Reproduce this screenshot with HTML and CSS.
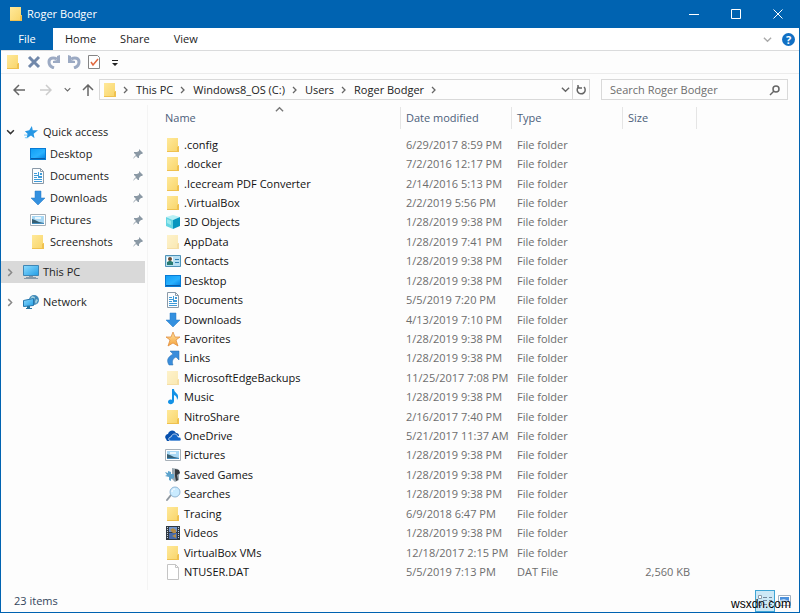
FILE: index.html
```html
<!DOCTYPE html>
<html lang="en">
<head>
    <meta charset="utf-8">
    <title>Roger Bodger</title>
    <link rel="stylesheet" href="styles.css">
</head>
<body>
    <svg class="sprite" aria-hidden="true">
        <defs>
            <linearGradient id="gFolder" x2="1" y2="1"><stop offset="0" stop-color="#ffe99a"/><stop offset="1" stop-color="#f8d468"/></linearGradient>
            <linearGradient id="gBlue" x2="1" y2="1"><stop offset="0" stop-color="#129ff5"/><stop offset=".6" stop-color="#2ab2ff"/><stop offset="1" stop-color="#0887e5"/></linearGradient>
            <linearGradient id="gScreen" x2="1" y2="1"><stop offset="0" stop-color="#8edcff"/><stop offset="1" stop-color="#219de5"/></linearGradient>
            <linearGradient id="gStar" x2="0" y2="1"><stop offset="0" stop-color="#ffe2a0"/><stop offset="1" stop-color="#f5a33b"/></linearGradient>
        </defs>
        <symbol id="folder" viewBox="0 0 16 16"><path fill="url(#gFolder)" d="M2 1h11v8h1v6H2z"/><path fill="#efc14f" d="M12 10l2-1v6h-2zM2 14h10v1H2z"/></symbol>
        <symbol id="desktop" viewBox="0 0 16 16"><path fill="#087bd4" d="M0 2h16v12H0z"/><path fill="url(#gBlue)" d="M1 3h14v9H1z"/><path fill="#0a5ca8" d="M1 12h14v1H1z"/></symbol>
        <symbol id="document" viewBox="0 0 16 16"><path fill="#fbfdff" stroke="#8b9aa8" d="M2.500.5h8l3 3v12h-11z"/><path fill="none" stroke="#8b9aa8" d="M10.500.5v3h3"/><path stroke="#3f9bd8" d="M4 5.500h3M4 7.500h4M4 9.500h3M4 11.500h8M4 13.500h8"/><path fill="#3f9bd8" d="M8 4h1v6H8zM10 5h2v2h-2zM9 8h3v2H9z"/></symbol>
        <symbol id="download" viewBox="0 0 16 16"><path fill="#3390df" stroke="#2479c6" stroke-width=".5" d="M5 1h6v7h4l-7 7-7-7h4z"/></symbol>
        <symbol id="picture" viewBox="0 0 16 16"><path fill="#fff" stroke="#a7b0b8" d="M.5 2.500h15v11H.5z"/><path fill="#a8d8f5" d="M2 4h12v8H2z"/><path fill="#e9f6fc" d="M5 5h6v2H5z"/><path fill="#365f73" d="M2 7l3 1 4 2 5 1v1H2z"/><path fill="#458ebf" d="M2 11h12v1H2z"/></symbol>
        <symbol id="pc" viewBox="0 0 16 16"><path fill="url(#gScreen)" stroke="#3e86b5" d="M.5 1.500h15v10H.5z"/><path fill="#8799a8" d="M6 12h4v1H6zM3 13h10v1H3zM1 14h14v1H1z"/></symbol>
        <symbol id="network" viewBox="0 0 16 16"><circle cx="11" cy="6" r="5" fill="#4089b8"/><path fill="#a1d0df" d="M9 2l3 1-1 3-4-1zM13 5l2 1-2 4-1-2z"/><path fill="url(#gScreen)" stroke="#2577ad" d="M.5 6.500l10-2v7l-10 1z"/><path fill="#27749f" d="M4 12h3v2h2v1H3v-1h1z"/></symbol>
        <symbol id="quick" viewBox="0 0 16 16"><path fill="#2797e4" d="M9 1l1 5 6 0-5 4 1 5-4-3-5 3 1-5-3-3 5-1z"/><path stroke="#69c3f5" d="M0 11.500h4M1 14.500h4"/></symbol>
        <symbol id="cube" viewBox="0 0 16 16"><path fill="#b8f0f5" d="M1 3l7-2 7 2-7 3z"/><path fill="#65d5e3" d="M1 3l7 3v9l-7-3z"/><path fill="#0796bf" d="M15 3L8 6v9l7-3z"/><path fill="#9ae9ed" d="M2 5l4 2v4L2 9z"/></symbol>
        <symbol id="contact" viewBox="0 0 16 16"><path fill="#b7dff2" stroke="#4f93b8" d="M.5 2.500h15v11H.5z"/><path fill="#fff" d="M2 4h6v8H2z"/><circle cx="5" cy="6" r="2" fill="#654b38"/><path fill="#297b71" d="M2 12V9l2-1h2l2 1v3z"/><path stroke="#3182b3" d="M10 6.500h4M10 9.500h4"/></symbol>
        <symbol id="star" viewBox="0 0 16 16"><path fill="url(#gStar)" stroke="#dc8736" stroke-width=".7" d="M8 1l2 5h5l-4 3 2 6-5-3-5 3 2-6-4-3h5z"/></symbol>
        <symbol id="shortcut" viewBox="0 0 16 16"><path fill="#3a8ddb" stroke="#276faf" stroke-width=".5" d="M5 1h9v9l-3-3c-4 2-4 5-3 8H4c-3-5-1-8 4-11z"/></symbol>
        <symbol id="music" viewBox="0 0 16 16"><path fill="#1492e6" d="M7 0h2c0 4 5 4 4 9l-1 2c0-3-1-4-3-5v6c0 4-6 4-6 1 0-2 2-3 4-2z"/></symbol>
        <symbol id="cloud" viewBox="0 0 16 16"><path fill="#0750ad" d="M1 11c-2-2 0-5 2-5 1-4 6-5 8-1 2 0 3 1 3 3L5 13H2z"/><path fill="#1265c7" stroke="#fff" stroke-width=".7" d="M6 13c-3 0-3-4 0-4 1-4 6-4 7 0 4 0 4 4 1 4z"/></symbol>
        <symbol id="games" viewBox="0 0 16 16"><path fill="#9ba8b0" d="M7 1l6 1 2 4-1 2v5l-4 2-3-3z"/><path fill="#34383c" d="M10 2l4 1 1 3-3 2 1 5-2 1-1-5z"/><path fill="#5da3cc" d="M0 5l3 1V4l3 1v2h3v4l-3 1v2l-2-1v-3L0 9l2-1z"/></symbol>
        <symbol id="search" viewBox="0 0 16 16"><path stroke="#8f979f" stroke-width="2" stroke-linecap="round" d="M2 14l4-5"/><circle cx="10" cy="6" r="5" fill="#c9ebff" stroke="#91b6d4"/><path fill="none" stroke="#fff" d="M7 6c0-2 1-3 3-3"/></symbol>
        <symbol id="video" viewBox="0 0 16 16"><path fill="#303943" d="M1 1h14v14H1z"/><path fill="#7195cf" d="M4 2h8v5H4z"/><path fill="#496baa" d="M4 8h8v6H4z"/><path fill="#b58c46" d="M5 5l3-2 3 2v3H8zM7 11l4-2v4z"/><path stroke="#c9d1d8" stroke-dasharray="1 1" d="M2.500 2v12M13.500 2v12"/></symbol>
        <symbol id="file" viewBox="0 0 16 16"><path fill="#fff" stroke="#c4c4c4" d="M2.500.5h8l3 3v12h-11z"/><path fill="none" stroke="#c4c4c4" d="M10.500.5v3h3"/></symbol>
        <symbol id="pin" viewBox="0 0 10 10"><path fill="#8b99a5" d="M6 0l4 4-1 1H8L6 7v2L5 9 3 7 1 9 0 10l1-2 2-2-2-2V3h3l2-1z"/></symbol>
        <symbol id="right" viewBox="0 0 8 8"><path fill="none" stroke="currentColor" stroke-width="1.300" d="M2 1l3 3-3 3"/></symbol>
        <symbol id="down" viewBox="0 0 10 10"><path fill="none" stroke="currentColor" stroke-width="1.500" d="M1 3l4 4 4-4"/></symbol>
        <symbol id="arrow" viewBox="0 0 12 12"><path fill="none" stroke="currentColor" stroke-width="1.500" d="M12 6H1M6 1L1 6l5 5"/></symbol>
        <symbol id="turn" viewBox="0 0 14 14"><path fill="none" stroke="#9caac3" stroke-width="3" d="M7 13C4 12 2 10 2 7c0-4 4-5 8-3"/><path fill="#9caac3" d="M13 0v8H6V6l4-1V1z"/></symbol>
    </svg>

    <div class="window">
        <header class="titlebar">
            <svg class="icon"><use href="#folder"/></svg>
            <h1>Roger Bodger</h1>
            <div class="controls">
                <button aria-label="Minimize"><svg viewBox="0 0 10 10"><path d="M0 5.500h10"/></svg></button>
                <button aria-label="Maximize"><svg viewBox="0 0 10 10"><path d="M.5.5h9v9h-9z"/></svg></button>
                <button aria-label="Close"><svg viewBox="0 0 10 10"><path d="M.5.5l9 9M9.500.5l-9 9"/></svg></button>
            </div>
        </header>

        <nav class="ribbon">
            <button class="tab file-tab">File</button>
            <button class="tab">Home</button>
            <button class="tab">Share</button>
            <button class="tab">View</button>
            <button class="expand" aria-label="Expand the ribbon"><svg><use href="#down"/></svg></button>
            <button class="help" aria-label="Help">?</button>
        </nav>

        <div class="toolbar">
            <button aria-label="New folder"><svg class="icon"><use href="#folder"/></svg></button>
            <button aria-label="Delete"><svg class="tool" viewBox="0 0 14 14"><path stroke="#7188aa" stroke-width="3" d="M2 2l10 10M12 2L2 12"/></svg></button>
            <button aria-label="Redo"><svg class="tool"><use href="#turn"/></svg></button>
            <button aria-label="Undo"><svg class="tool flip"><use href="#turn"/></svg></button>
            <button aria-label="Properties"><svg class="tool" viewBox="0 0 14 14"><path fill="#fff" stroke="#858585" d="M1.500.5h9l2 2v11h-11z"/><path fill="none" stroke="#e0683e" stroke-width="1.500" d="M4 7l2 3 5-6"/></svg></button>
            <button aria-label="Customize toolbar"><svg class="tool" viewBox="0 0 14 14"><path fill="#222" d="M5 5h6v1H5zM5 8h6l-3 3z"/></svg></button>
        </div>

        <div class="navigation">
            <div class="history">
                <button aria-label="Back"><svg><use href="#arrow"/></svg></button>
                <button class="disabled" aria-label="Forward" disabled><svg class="flip"><use href="#arrow"/></svg></button>
                <button class="recent" aria-label="Recent locations"><svg><use href="#down"/></svg></button>
                <button aria-label="Up"><svg class="up"><use href="#arrow"/></svg></button>
            </div>
            <div class="address">
                <svg class="icon"><use href="#folder"/></svg>
                <svg class="crumb"><use href="#right"/></svg>
                <a href="#">This PC</a>
                <svg class="crumb"><use href="#right"/></svg>
                <a href="#">Windows8_OS (C:)</a>
                <svg class="crumb"><use href="#right"/></svg>
                <a href="#">Users</a>
                <svg class="crumb"><use href="#right"/></svg>
                <a href="#">Roger Bodger</a>
                <svg class="crumb"><use href="#right"/></svg>
                <button class="previous" aria-label="Previous locations"><svg><use href="#down"/></svg></button>
                <button class="refresh" aria-label="Refresh"><svg viewBox="0 0 12 12"><path fill="none" stroke="currentColor" stroke-width="1.500" d="M9 3a4 4 0 1 1-5-.5M3 1v3h4"/></svg></button>
            </div>
            <div class="search">
                <input type="text" placeholder="Search Roger Bodger" aria-label="Search Roger Bodger">
                <button aria-label="Search"><svg viewBox="0 0 12 12"><path fill="none" stroke="currentColor" stroke-width="1.500" d="M5 7l-4 4"/><circle cx="7" cy="5" r="3" fill="none" stroke="currentColor" stroke-width="1.500"/></svg></button>
            </div>
        </div>

        <main class="content">
            <aside class="sidebar">
                <ul>
                    <li><a class="root" href="#"><svg class="toggle open"><use href="#right"/></svg><svg class="icon quick"><use href="#quick"/></svg>Quick access</a></li>
                    <li><a href="#"><svg class="icon"><use href="#desktop"/></svg>Desktop<svg class="pin"><use href="#pin"/></svg></a></li>
                    <li><a href="#"><svg class="icon"><use href="#document"/></svg>Documents<svg class="pin"><use href="#pin"/></svg></a></li>
                    <li><a href="#"><svg class="icon"><use href="#download"/></svg>Downloads<svg class="pin"><use href="#pin"/></svg></a></li>
                    <li><a href="#"><svg class="icon"><use href="#picture"/></svg>Pictures<svg class="pin"><use href="#pin"/></svg></a></li>
                    <li><a href="#"><svg class="icon"><use href="#folder"/></svg>Screenshots<svg class="pin"><use href="#pin"/></svg></a></li>
                </ul>
                <a class="root selected" href="#"><svg class="toggle"><use href="#right"/></svg><svg class="icon"><use href="#pc"/></svg>This PC</a>
                <a class="root" href="#"><svg class="toggle"><use href="#right"/></svg><svg class="icon"><use href="#network"/></svg>Network</a>
            </aside>

            <section class="files">
                <table>
                    <colgroup><col class="col-name"><col class="col-date"><col class="col-type"><col class="col-size"><col></colgroup>
                    <thead>
                        <tr>
                            <th><button>Name</button><svg class="sort"><use href="#down"/></svg></th>
                            <th><button>Date modified</button></th>
                            <th><button>Type</button></th>
                            <th><button>Size</button></th>
                            <th></th>
                        </tr>
                    </thead>
                    <tbody>
                        <tr><td><a href="#"><svg class="icon"><use href="#folder"/></svg>.config</a></td><td>6/29/2017 8:59 PM</td><td>File folder</td><td></td></tr>
                        <tr><td><a href="#"><svg class="icon"><use href="#folder"/></svg>.docker</a></td><td>7/2/2016 12:17 PM</td><td>File folder</td><td></td></tr>
                        <tr><td><a href="#"><svg class="icon"><use href="#folder"/></svg>.Icecream PDF Converter</a></td><td>2/14/2016 5:13 PM</td><td>File folder</td><td></td></tr>
                        <tr><td><a href="#"><svg class="icon"><use href="#folder"/></svg>.VirtualBox</a></td><td>2/2/2019 5:56 PM</td><td>File folder</td><td></td></tr>
                        <tr><td><a href="#"><svg class="icon"><use href="#cube"/></svg>3D Objects</a></td><td>1/28/2019 9:38 PM</td><td>File folder</td><td></td></tr>
                        <tr><td><a href="#"><svg class="icon faded"><use href="#folder"/></svg>AppData</a></td><td>1/28/2019 7:41 PM</td><td>File folder</td><td></td></tr>
                        <tr><td><a href="#"><svg class="icon"><use href="#contact"/></svg>Contacts</a></td><td>1/28/2019 9:38 PM</td><td>File folder</td><td></td></tr>
                        <tr><td><a href="#"><svg class="icon"><use href="#desktop"/></svg>Desktop</a></td><td>1/28/2019 9:38 PM</td><td>File folder</td><td></td></tr>
                        <tr><td><a href="#"><svg class="icon"><use href="#document"/></svg>Documents</a></td><td>5/5/2019 7:20 PM</td><td>File folder</td><td></td></tr>
                        <tr><td><a href="#"><svg class="icon"><use href="#download"/></svg>Downloads</a></td><td>4/13/2019 7:10 PM</td><td>File folder</td><td></td></tr>
                        <tr><td><a href="#"><svg class="icon"><use href="#star"/></svg>Favorites</a></td><td>1/28/2019 9:38 PM</td><td>File folder</td><td></td></tr>
                        <tr><td><a href="#"><svg class="icon"><use href="#shortcut"/></svg>Links</a></td><td>1/28/2019 9:38 PM</td><td>File folder</td><td></td></tr>
                        <tr><td><a href="#"><svg class="icon faded"><use href="#folder"/></svg>MicrosoftEdgeBackups</a></td><td>11/25/2017 7:08 PM</td><td>File folder</td><td></td></tr>
                        <tr><td><a href="#"><svg class="icon"><use href="#music"/></svg>Music</a></td><td>1/28/2019 9:38 PM</td><td>File folder</td><td></td></tr>
                        <tr><td><a href="#"><svg class="icon"><use href="#folder"/></svg>NitroShare</a></td><td>2/16/2017 7:40 PM</td><td>File folder</td><td></td></tr>
                        <tr><td><a href="#"><svg class="icon"><use href="#cloud"/></svg>OneDrive</a></td><td>5/21/2017 11:37 AM</td><td>File folder</td><td></td></tr>
                        <tr><td><a href="#"><svg class="icon"><use href="#picture"/></svg>Pictures</a></td><td>1/28/2019 9:38 PM</td><td>File folder</td><td></td></tr>
                        <tr><td><a href="#"><svg class="icon"><use href="#games"/></svg>Saved Games</a></td><td>1/28/2019 9:38 PM</td><td>File folder</td><td></td></tr>
                        <tr><td><a href="#"><svg class="icon"><use href="#search"/></svg>Searches</a></td><td>1/28/2019 9:38 PM</td><td>File folder</td><td></td></tr>
                        <tr><td><a href="#"><svg class="icon"><use href="#folder"/></svg>Tracing</a></td><td>6/9/2018 6:47 PM</td><td>File folder</td><td></td></tr>
                        <tr><td><a href="#"><svg class="icon"><use href="#video"/></svg>Videos</a></td><td>1/28/2019 9:38 PM</td><td>File folder</td><td></td></tr>
                        <tr><td><a href="#"><svg class="icon"><use href="#folder"/></svg>VirtualBox VMs</a></td><td>12/18/2017 2:15 PM</td><td>File folder</td><td></td></tr>
                        <tr><td><a href="#"><svg class="icon"><use href="#file"/></svg>NTUSER.DAT</a></td><td>5/5/2019 7:13 PM</td><td>DAT File</td><td>2,560 KB</td></tr>
                    </tbody>
                </table>
            </section>
        </main>

        <footer class="statusbar">
            <span>23 items</span>
            <div class="views">
                <button class="active" aria-label="Details view"><svg viewBox="0 0 16 14"><path fill="#fff" stroke="#8b9cab" d="M1.500 1.500h3v3h-3zM1.500 8.500h3v3h-3z"/><path stroke="#71879b" stroke-dasharray="4 2" d="M6 3.500h9M6 6.500h9M6 10.500h9"/></svg></button>
                <button aria-label="Large icons view"><svg viewBox="0 0 16 14"><path fill="#fff" stroke="#a1b0c0" d="M1.500 1.500h12v10h-12z"/><path fill="#4c91dc" d="M3 3h9v5H3z"/><path fill="#b8d6f5" d="M3 6l4-1 5 2v1H3z"/></svg></button>
            </div>
        </footer>
        <span class="watermark">wsxdn.com</span>
    </div>
</body>
</html>
```
FILE: styles.css
```css
* {
    box-sizing: border-box;
}

body {
    margin: 0;
    font-family: "Open Sans", "Noto Sans", sans-serif;
    font-size: 11px;
    line-height: 16px;
    color: #222;
    background: #fff;
}

button, input {
    font: inherit;
    color: inherit;
    border: 0;
    padding: 0;
    background: none;
}

a {
    color: inherit;
    text-decoration: none;
}

svg {
    display: block;
    flex: none;
}

.sprite {
    position: absolute;
    width: 0;
    height: 0;
}

.icon {
    width: 16px;
    height: 16px;
}

.faded {
    opacity: .5;
}

.flip {
    transform: scaleX(-1);
}

.window {
    position: relative;
    display: flex;
    flex-direction: column;
    min-height: 100vh;
    border: 1px solid #0063b1;
    border-top: 0;
    background: #fdfdfd;
}

.titlebar {
    display: flex;
    align-items: center;
    height: 28px;
    padding-left: 7px;
    gap: 3px;
    color: #fff;
    background: #0063b1;
}

.titlebar h1 {
    margin: 0;
    font-size: 11px;
    font-weight: normal;
}

.controls {
    display: flex;
    margin-left: auto;
}

.controls button {
    display: flex;
    justify-content: center;
    width: 42px;
    padding: 9px 0;
}

.controls svg {
    width: 10px;
    height: 10px;
    fill: none;
    stroke: #fff;
}

.ribbon {
    display: flex;
    align-items: center;
    height: 23px;
    background: #fff;
    border-bottom: 1px solid #dadbdc;
}

.tab {
    height: 22px;
    padding: 0 12px;
}

.file-tab {
    width: 52px;
    color: #fff;
    background: #0063b1;
}

.expand {
    margin-left: auto;
    color: #aaa;
}

.expand svg {
    width: 9px;
    height: 9px;
}

.help {
    width: 13px;
    height: 13px;
    margin: 0 4px 0 10px;
    border-radius: 50%;
    line-height: 13px;
    font-weight: bold;
    color: #fff;
    background: #1170c4;
}

.toolbar {
    display: flex;
    align-items: center;
    gap: 6px;
    height: 23px;
    padding-left: 4px;
    border-bottom: 1px solid #ececec;
}

.tool {
    width: 14px;
    height: 14px;
}

.navigation {
    display: flex;
    align-items: center;
    height: 31px;
    padding-right: 11px;
}

.history {
    display: flex;
    align-items: center;
    gap: 15px;
    width: 98px;
    padding-left: 12px;
    color: #666;
}

.history svg {
    width: 12px;
    height: 12px;
}

.history .disabled {
    color: #ccc;
}

.history .recent svg {
    width: 7px;
    height: 7px;
}

.history .recent {
    margin: 0 -4px 0 -3px;
}

.history .up {
    transform: rotate(90deg);
}

.address {
    display: flex;
    align-items: center;
    flex: 1;
    height: 21px;
    padding-left: 2px;
    border: 1px solid #d9d9d9;
}

.address .icon {
    margin-right: 4px;
}

.crumb {
    width: 8px;
    height: 8px;
    margin: 0 6px;
    color: #666;
}

.address .icon + .crumb {
    margin-left: 0;
}

.previous {
    margin: 0 2px 0 auto;
    color: #666;
}

.previous svg {
    width: 9px;
    height: 9px;
}

.refresh {
    align-self: stretch;
    padding: 0 2px;
    border-left: 1px solid #d9d9d9;
    color: #666;
}

.refresh svg {
    width: 12px;
    height: 12px;
}

.search {
    display: flex;
    align-items: center;
    width: 187px;
    height: 21px;
    margin-left: 11px;
    padding: 0 6px 0 8px;
    border: 1px solid #d9d9d9;
    color: #666;
}

.search input {
    flex: 1;
    min-width: 0;
    outline: 0;
}

.search input::placeholder {
    color: #6d6d6d;
}

.search svg {
    width: 12px;
    height: 12px;
}

.content {
    display: flex;
    flex: 1;
}

.sidebar {
    display: flex;
    flex-direction: column;
    gap: 8px;
    width: 147px;
    padding: 16px 2px 0 0;
    border-right: 1px solid #f4f4f4;
}

.sidebar ul {
    margin: 0;
    padding: 0;
    list-style: none;
}

.sidebar a {
    display: flex;
    align-items: center;
    gap: 4px;
    height: 22px;
    padding-left: 29px;
}

.sidebar .root {
    padding-left: 5px;
}

.toggle {
    width: 9px;
    height: 9px;
    margin-right: 4px;
    color: #888;
}

.toggle.open {
    transform: rotate(90deg);
    color: #333;
}

.quick {
    padding: 1px;
}

.selected {
    background: #d9d9d9;
}

.pin {
    width: 10px;
    height: 10px;
    margin: 0 2px 0 auto;
}

.files {
    display: flex;
    flex: 1;
    padding-bottom: 8px;
}

table {
    width: 100%;
    table-layout: fixed;
    border-collapse: separate;
    border-spacing: 0;
}

.col-name {
    width: 253px;
}

.col-date,
.col-type {
    width: 111px;
}

.col-size {
    width: 74px;
}

th {
    position: relative;
    height: 30px;
    padding: 2px 5px 6px;
    text-align: left;
    font-weight: normal;
    color: #4c607a;
    background: linear-gradient(#e5e5e5, #e5e5e5) right 2px / 1px 22px no-repeat;
}

th:first-child {
    padding-left: 17px;
}

th:last-child {
    background: none;
}

th button {
    display: block;
}

.sort {
    position: absolute;
    top: 0;
    left: 50%;
    width: 9px;
    height: 9px;
    color: #777;
    transform: rotate(180deg);
}

td {
    padding: 0 5px;
    color: #6d6d6d;
    white-space: nowrap;
}

td:first-child {
    padding-left: 17px;
    color: #111;
}

td:nth-child(4) {
    padding-right: 7px;
    text-align: right;
}

td a {
    display: flex;
    align-items: center;
    gap: 3px;
}

.statusbar {
    display: flex;
    align-items: center;
    justify-content: space-between;
    height: 22px;
    padding: 0 4px 0 13px;
    color: #34455c;
}

.views {
    display: flex;
}

.views button {
    padding: 3px 1px;
    border: 1px solid transparent;
}

.views .active {
    border-color: #3fa5d5;
    background: #cce8f6;
}

.views svg {
    width: 16px;
    height: 14px;
}

.watermark {
    position: absolute;
    right: 8px;
    bottom: 0;
    font-family: "Liberation Sans", Arial, sans-serif;
    font-size: 12px;
    color: #000;
}
```
